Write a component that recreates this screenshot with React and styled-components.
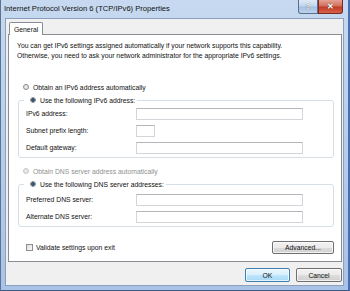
import React from 'react'
import styled, { createGlobalStyle } from 'styled-components'

const Global = createGlobalStyle`
html, body {
  margin: 0;
  padding: 0;
  background: #ffffff;
}
body {
  font-family: "Liberation Sans", Arial, sans-serif;
  color: #111111;
}
`

const Window = styled.div`
width: 350px;
height: 291px;
box-sizing: border-box;
display: flex;
flex-direction: column;
background: linear-gradient(to bottom, #c6d9f0 0%, #b8cfeb 45%, #a9c3e6 100%);
border-left: 1px solid #5d7393;
border-right: 2px solid #4a6fb0;
border-bottom: 1px solid #3d5a85;
`

const TitleBar = styled.div`
height: 18px;
flex: none;
display: flex;
align-items: flex-start;
justify-content: space-between;
padding-left: 3px;
`

const Title = styled.span`
font-size: 7.6px;
line-height: 18px;
color: #111111;
`

const Caption = styled.div`
display: flex;
margin-right: 5px;
`

const CaptionButton = styled.div`
width: ${({ w }) => w}px;
height: 14px;
box-sizing: border-box;
display: flex;
align-items: center;
justify-content: center;
font-size: 8px;
font-weight: 700;
color: #ffffff;
border: 1px solid ${({ red }) => (red ? '#7a2a22' : '#5a6f8e')};
border-top: none;
border-radius: ${({ red }) => (red ? '0 0 3px 0' : '0 0 0 3px')};
background: ${({ red }) =>
  red
    ? 'linear-gradient(to bottom, #e6a294 0%, #d1705c 45%, #c23c25 55%, #d6624a 100%)'
    : 'linear-gradient(to bottom, #dfe9f6 0%, #c3d5ec 45%, #a8c0e0 55%, #bcd1ec 100%)'};
text-shadow: 0 0 1px #333;
`

const Client = styled.div`
flex: 1;
min-height: 0;
display: flex;
flex-direction: column;
margin: 0 4px 4px 4px;
padding: 3px 1px 3px 2px;
background: #f0f0f0;
border: 1px solid #8ba0bd;
`

const TabStrip = styled.div`
display: flex;
padding-left: 1px;
`

const Tab = styled.div`
position: relative;
z-index: 1;
height: 13px;
box-sizing: border-box;
margin-bottom: -1px;
padding: 0 4px;
display: flex;
align-items: center;
font-size: 6.8px;
background: #ffffff;
border: 1px solid #898c95;
border-bottom: none;
border-radius: 2px 2px 0 0;
`

const Panel = styled.div`
flex: 1;
min-height: 0;
display: flex;
flex-direction: column;
background: #ffffff;
border: 1px solid #898c95;
padding: 6px 7px 7px 8px;
`

const Description = styled.p`
margin: 0 0 21px 0;
font-size: 6.8px;
line-height: 10px;
white-space: nowrap;
`

const Option = styled.label`
display: flex;
align-items: center;
gap: 4px;
height: 10px;
margin: ${({ gap }) => gap || 0}px 0 0 6px;
padding-right: 2px;
font-size: 6.8px;
color: ${({ disabled }) => (disabled ? '#8f8f8f' : '#111111')};
background: #ffffff;
`

const Radio = styled.span`
width: 6px;
height: 6px;
box-sizing: border-box;
border-radius: 50%;
border: 1px solid ${({ disabled }) => (disabled ? '#c5c5c5' : '#8a8a8a')};
background: ${({ checked }) =>
  checked
    ? 'radial-gradient(circle, #2e5873 0 1.6px, #d6e3ea 2px)'
    : 'radial-gradient(circle, #f0f0f0, #dcdcdc)'};
`

const Group = styled.fieldset`
margin: 3px 0 0 1px;
padding: ${({ top }) => top}px 0 1px 7px;
border: 1px solid #d5dfe5;
border-radius: 3px;
min-width: 0;
`

const Legend = styled.legend`
padding: 0;
margin-left: -2px;
`

const Field = styled.div`
display: grid;
grid-template-columns: 110px 1fr;
align-items: center;
height: 17px;
font-size: 6.8px;
`

const Input = styled.div`
width: ${({ w }) => w}px;
height: 12px;
box-sizing: border-box;
border: 1px solid #d3d5da;
border-top-color: #b4b6bb;
background: #ffffff;
`

const Footer = styled.div`
display: flex;
align-items: center;
justify-content: space-between;
margin-top: auto;
padding-left: 9px;
`

const Check = styled.label`
display: flex;
align-items: center;
gap: 3px;
font-size: 6.8px;
`

const Box = styled.span`
width: 7px;
height: 7px;
box-sizing: border-box;
border: 1px solid #8e8f8f;
background: linear-gradient(135deg, #dcdcdc, #fbfbfb);
`

const Button = styled.button`
width: ${({ w }) => w}px;
height: ${({ h }) => h || 14}px;
box-sizing: border-box;
padding: 0;
font-family: "Liberation Sans", Arial, sans-serif;
font-size: 6.8px;
color: #111111;
border-radius: 2px;
border: 1px solid ${({ primary }) => (primary ? '#3c7fb1' : '#707070')};
background: ${({ primary }) =>
  primary
    ? 'linear-gradient(to bottom, #eaf6fd 0%, #d9f0fc 50%, #bee6fd 51%, #a7d9f5 100%)'
    : 'linear-gradient(to bottom, #f2f2f2 0%, #ebebeb 50%, #dddddd 51%, #cfcfcf 100%)'};
box-shadow: inset 0 0 0 1px rgba(255, 255, 255, 0.7);
`

const Buttons = styled.div`
display: flex;
justify-content: flex-end;
gap: 6px;
padding-top: 6px;
`

const fieldsV6 = [
  { label: 'IPv6 address:', w: 167 },
  { label: 'Subnet prefix length:', w: 19 },
  { label: 'Default gateway:', w: 167 },
]

const fieldsDns = [
  { label: 'Preferred DNS server:', w: 167 },
  { label: 'Alternate DNS server:', w: 167 },
]

export default function App() {
  return (
    <>
      <Global />
      <Window>
        <TitleBar>
          <Title>Internet Protocol Version 6 (TCP/IPv6) Properties</Title>
          <Caption>
            <CaptionButton w={20}>?</CaptionButton>
            <CaptionButton w={25} red>✕</CaptionButton>
          </Caption>
        </TitleBar>
        <Client>
          <TabStrip>
            <Tab>General</Tab>
          </TabStrip>
          <Panel>
            <Description>
              You can get IPv6 settings assigned automatically if your network supports this capability.
              <br />
              Otherwise, you need to ask your network administrator for the appropriate IPv6 settings.
            </Description>
            <Option>
              <Radio />
              Obtain an IPv6 address automatically
            </Option>
            <Group top={0}>
              <Legend>
                <Option>
                  <Radio checked />
                  Use the following IPv6 address:
                </Option>
              </Legend>
              {fieldsV6.map((f) => (
                <Field key={f.label}>
                  {f.label}
                  <Input w={f.w} />
                </Field>
              ))}
            </Group>
            <Option disabled gap={8}>
              <Radio disabled />
              Obtain DNS server address automatically
            </Option>
            <Group top={2}>
              <Legend>
                <Option>
                  <Radio checked />
                  Use the following DNS server addresses:
                </Option>
              </Legend>
              {fieldsDns.map((f) => (
                <Field key={f.label}>
                  {f.label}
                  <Input w={f.w} />
                </Field>
              ))}
            </Group>
            <Footer>
              <Check>
                <Box />
                Validate settings upon exit
              </Check>
              <Button w={62} h={13}>Advanced...</Button>
            </Footer>
          </Panel>
          <Buttons>
            <Button w={45} primary>OK</Button>
            <Button w={46}>Cancel</Button>
          </Buttons>
        </Client>
      </Window>
    </>
  )
}
